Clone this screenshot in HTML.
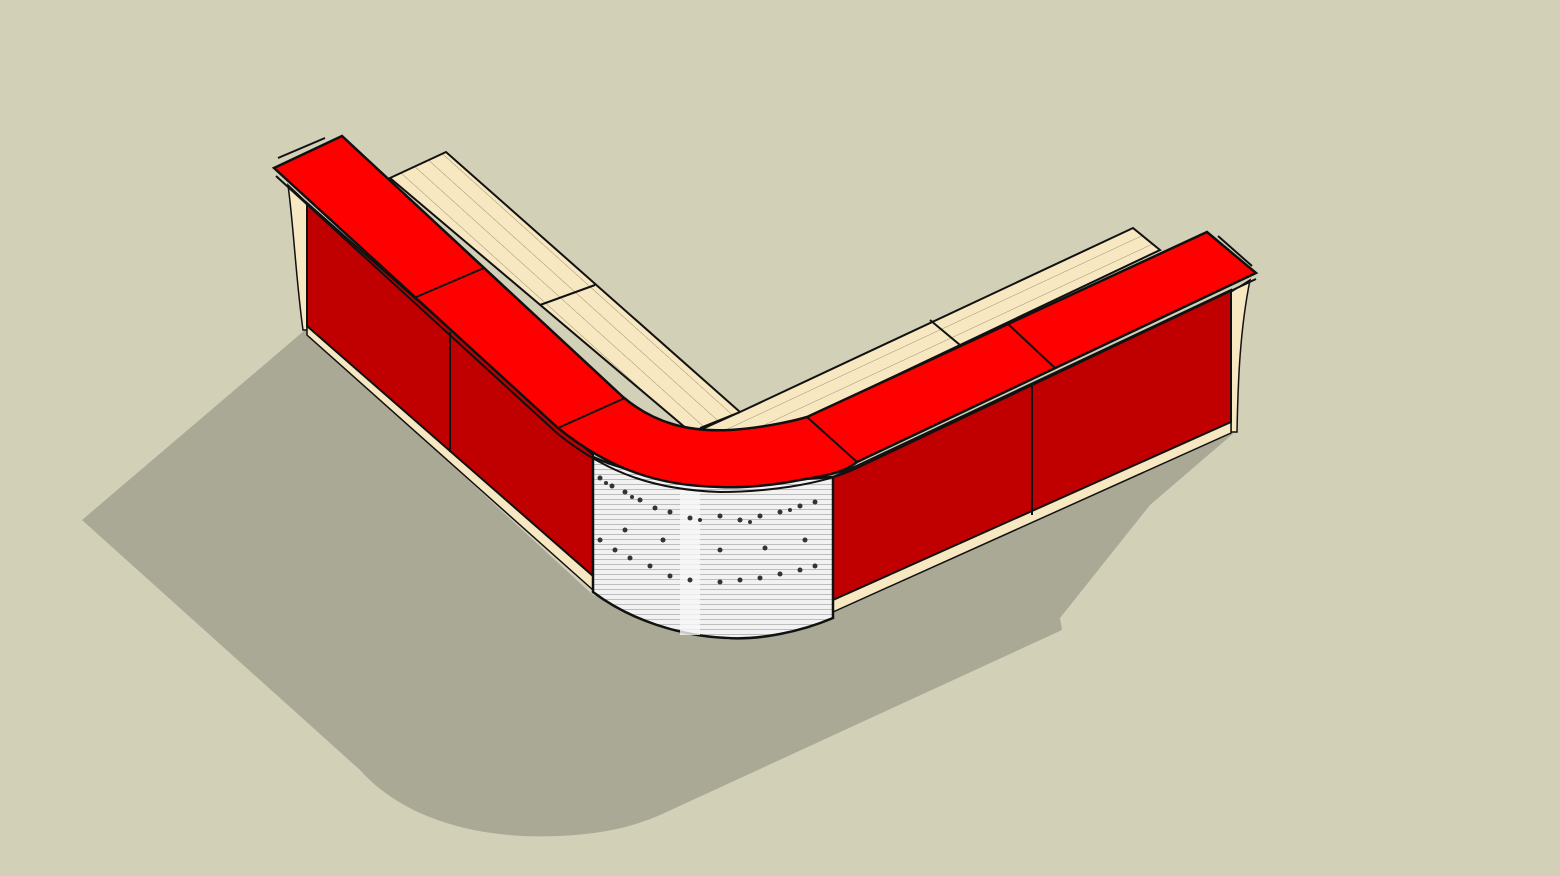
<!DOCTYPE html>
<html><head><meta charset="utf-8"><style>
html,body{margin:0;padding:0;background:#d3d0b8;}
svg{display:block}
</style></head><body>
<svg width="1560" height="876" viewBox="0 0 1560 876" xmlns="http://www.w3.org/2000/svg">
<defs>
<pattern id="wl" width="14" height="14" patternUnits="userSpaceOnUse" patternTransform="rotate(42)">
<rect width="14" height="14" fill="#f7e8c2"/><line x1="0" y1="0" x2="14" y2="0" stroke="#8a7d60" stroke-width="0.8"/>
</pattern>
<pattern id="wr" width="12" height="12" patternUnits="userSpaceOnUse" patternTransform="rotate(-25)">
<rect width="12" height="12" fill="#f7e8c2"/><line x1="0" y1="0" x2="12" y2="0" stroke="#8a7d60" stroke-width="0.8"/>
</pattern>
<pattern id="wh" width="8" height="5" patternUnits="userSpaceOnUse">
<rect width="8" height="5" fill="#f2f2f2"/><line x1="0" y1="4.5" x2="8" y2="4.5" stroke="#9a9a9a" stroke-width="0.6"/>
</pattern>
</defs>
<rect width="1560" height="876" fill="#d3d0b8"/>
<path d="M305,330 L82,520 L360,770 C400,815 470,840 560,836 C600,834 630,828 660,815 L1062,630 L1060,618 L1150,505 L1235,432 L833,612 L728,640 L593,595 Z" fill="#aaa995"/>
<polygon points="390,178 446,152 740,412 700,440" fill="url(#wl)" stroke="#111" stroke-width="2"/>
<polygon points="700,430 740,412 1133,228 1160,250 760,440" fill="url(#wr)" stroke="#111" stroke-width="2"/>
<line x1="540" y1="305" x2="595" y2="285" stroke="#111" stroke-width="2"/>
<line x1="930" y1="320" x2="960" y2="345" stroke="#111" stroke-width="2"/>
<line x1="700" y1="428" x2="740" y2="412" stroke="#111" stroke-width="2"/>
<path d="M288,185 L307,203 L307,330 L303,330 C296,280 294,230 288,185 Z" fill="#f7e8c2" stroke="#111" stroke-width="1.5"/>
<path d="M1231,292 L1250,280 C1240,330 1238,380 1237,432 L1231,432 Z" fill="#f7e8c2" stroke="#111" stroke-width="1.5"/>
<polygon points="307,322 593,570 593,590 307,335" fill="#f7e8c2" stroke="#111" stroke-width="1.5"/>
<polygon points="833,598 1231,420 1231,433 833,612" fill="#f7e8c2" stroke="#111" stroke-width="1.5"/>
<polygon points="307,203 593,455 593,576 307,326" fill="#c00000" stroke="#111" stroke-width="2"/>
<polygon points="833,477 1231,290 1231,422 833,600" fill="#c00000" stroke="#111" stroke-width="2"/>
<line x1="450" y1="332" x2="450" y2="452" stroke="#111" stroke-width="2"/>
<line x1="1032" y1="385" x2="1032" y2="515" stroke="#111" stroke-width="2"/>
<path d="M593,457 C640,478 700,487 833,477 L833,618 C800,632 760,640 727,638 C680,636 630,620 593,592 Z" fill="url(#wh)" stroke="#111" stroke-width="2.5"/>
<rect x="680" y="490" width="20" height="145" fill="#f6f6f6" opacity="0.8"/>
<g fill="#333">
<circle cx="600" cy="478" r="2.5"/><circle cx="612" cy="486" r="2.5"/><circle cx="625" cy="492" r="2.5"/><circle cx="640" cy="500" r="2.5"/><circle cx="655" cy="508" r="2.5"/><circle cx="670" cy="512" r="2.5"/><circle cx="690" cy="518" r="2.5"/><circle cx="720" cy="516" r="2.5"/><circle cx="740" cy="520" r="2.5"/><circle cx="760" cy="516" r="2.5"/><circle cx="780" cy="512" r="2.5"/><circle cx="800" cy="506" r="2.5"/><circle cx="815" cy="502" r="2.5"/>
<circle cx="606" cy="483" r="2"/><circle cx="632" cy="497" r="2"/><circle cx="700" cy="520" r="2"/><circle cx="750" cy="522" r="2"/><circle cx="790" cy="510" r="2"/>
<circle cx="600" cy="540" r="2.5"/><circle cx="615" cy="550" r="2.5"/><circle cx="630" cy="558" r="2.5"/><circle cx="650" cy="566" r="2.5"/><circle cx="670" cy="576" r="2.5"/><circle cx="690" cy="580" r="2.5"/><circle cx="720" cy="582" r="2.5"/><circle cx="740" cy="580" r="2.5"/><circle cx="760" cy="578" r="2.5"/><circle cx="780" cy="574" r="2.5"/><circle cx="800" cy="570" r="2.5"/><circle cx="815" cy="566" r="2.5"/>
<circle cx="625" cy="530" r="2.5"/><circle cx="663" cy="540" r="2.5"/><circle cx="720" cy="550" r="2.5"/><circle cx="765" cy="548" r="2.5"/><circle cx="805" cy="540" r="2.5"/>
</g>
<path d="M274,168 L342,136 L623,397 C655,424 690,432 730,430 C760,428 790,422 807,417 L1207,232 L1256,273 L857,462 C845,472 830,475 800,480 C770,486 740,488 720,487 C660,486 610,470 558,428 Z" fill="#ff0000" stroke="#111" stroke-width="2.5"/>
<path d="M276,176 L558,434 C610,476 660,490 720,492 C760,492 820,486 857,468 L1256,279" fill="none" stroke="#111" stroke-width="2"/>
<line x1="414" y1="298" x2="484" y2="268" stroke="#111" stroke-width="2"/>
<line x1="558" y1="428" x2="625" y2="398" stroke="#111" stroke-width="2"/>
<line x1="807" y1="417" x2="857" y2="462" stroke="#111" stroke-width="2"/>
<line x1="1008" y1="324" x2="1055" y2="368" stroke="#111" stroke-width="2"/>
<line x1="278" y1="158" x2="325" y2="138" stroke="#111" stroke-width="2"/>
<line x1="1218" y1="236" x2="1252" y2="266" stroke="#111" stroke-width="2"/>
</svg>
</body></html>
